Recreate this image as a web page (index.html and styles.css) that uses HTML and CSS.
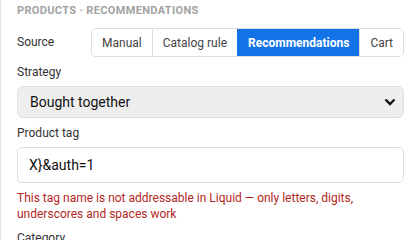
FILE: index.html
```html
<!DOCTYPE html>
<html lang="en">
<head>
  <meta charset="UTF-8" />
  <title>Products | Recommendations</title>
  <link rel="stylesheet" href="styles.css">
</head>
<body>
  <div class="panel">
    <h2 class="crumb">Products · Recommendations</h2>

    <!-- Source -->
    <div class="source-row">
      <span class="label">Source</span>
      <div class="segmented">
        <button>Manual</button>
        <button>Catalog rule</button>
        <button class="active">Recommendations</button>
        <button>Cart</button>
      </div>
    </div>

    <div class="field">
      <label for="strategy">Strategy</label>
      <div class="select-wrap">
        <select id="strategy">
          <option>Bought together</option>
          <option>Similar products</option>
          <option>Trending</option>
        </select>
        <svg class="chevron" width="12" height="8" viewBox="0 0 12 8"><path d="M1.5 1.5 L6 6 L10.5 1.5" fill="none" stroke="#111" stroke-width="2.4"/></svg>
      </div>
    </div>

    <div class="field">
      <label for="tag">Product tag</label>
      <input type="text" id="tag" value="X}&amp;auth=1" />
      <p class="error">This tag name is not addressable in Liquid — only letters, digits, underscores and spaces work</p>
    </div>

    <div class="field last">
      <label for="category">Category</label>
    </div>
  </div>
</body>
</html>
```

FILE: styles.css
```css
* {
  box-sizing: border-box;
  margin: 0;
  padding: 0;
  font-family: Roboto, Arial, sans-serif;
}
body {
  background: #fff;
  overflow: hidden;
}
.panel {
  width: 420px;
  height: 240px;
  border-left: 1px solid #e6e6e6;
  padding: 4px 16px 0 16px;
}
.crumb {
  font-size: 11px;
  font-weight: 700;
  letter-spacing: 0.35px;
  text-transform: uppercase;
  color: #a2a2a2;
  line-height: 14px;
  height: 14px;
}
.source-row {
  display: flex;
  align-items: center;
  margin-top: 10px;
}
.label,
.field label {
  font-size: 12px;
  color: #333;
  line-height: 15px;
}
.label {
  width: 74px;
  flex-shrink: 0;
}
.segmented {
  display: flex;
  flex-grow: 1;
  border: 1px solid #dcdcdc;
  border-radius: 5px;
  overflow: hidden;
  height: 29px;
}
.segmented button {
  border: none;
  border-left: 1px solid #dcdcdc;
  background: #fff;
  color: #444;
  font-size: 12px;
  padding: 0 10px;
  flex-grow: 1;
  white-space: nowrap;
  cursor: pointer;
}
.segmented button:first-child {
  border-left: none;
}
.segmented button.active {
  background: #1273e6;
  border-left-color: #1273e6;
  color: #fff;
  font-weight: 700;
}
.field {
  margin-top: 8px;
}
.field.last {
  margin-top: 9px;
}
.field label {
  display: block;
  margin-bottom: 6px;
}
.select-wrap {
  position: relative;
}
.select-wrap select {
  width: 100%;
  height: 32px;
  appearance: none;
  background: #eee;
  border: 1px solid #e0e0e0;
  border-radius: 6px;
  font-size: 14px;
  color: #111;
  padding: 0 12px;
}
.chevron {
  position: absolute;
  right: 8px;
  top: 12px;
}
.field input {
  width: 100%;
  height: 36px;
  border: 1px solid #dedede;
  border-radius: 5px;
  font-size: 14px;
  color: #111;
  padding: 0 11px;
  background: #fff;
}
.error {
  margin-top: 7px;
  font-size: 12px;
  line-height: 16px;
  color: #b3261e;
}
```
